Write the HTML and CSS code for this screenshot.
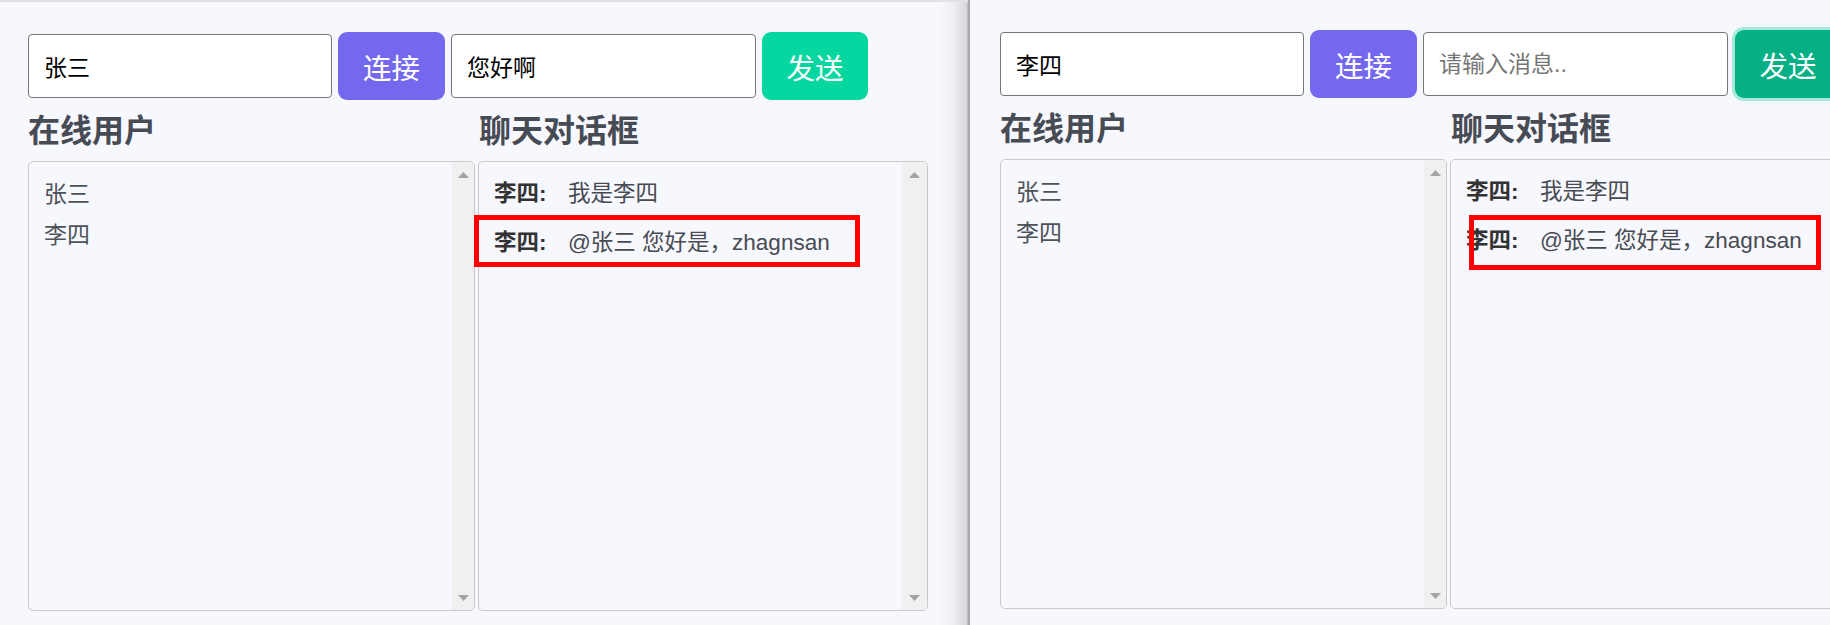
FILE: index.html
```html
<!DOCTYPE html>
<html lang="zh">
<head>
<meta charset="utf-8">
<title>聊天室</title>
<link rel="stylesheet" href="styles.css">
</head>
<body>
<div class="screen">
  <div class="window window-left">
    <div class="topbar"></div>
    <div class="page">
      <div class="controls">
        <input class="field" type="text" value="张三">
        <button class="btn btn-connect">连接</button>
        <input class="field field-msg" type="text" value="您好啊" placeholder="请输入消息..">
        <button class="btn btn-send">发送</button>
      </div>
      <div class="columns">
        <div class="col col-users">
          <h2 class="title">在线用户</h2>
          <div class="box">
            <div class="box-content">
              <div class="user">张三</div>
              <div class="user">李四</div>
            </div>
            <div class="scrollbar">
              <svg class="arrow" viewBox="0 0 11 6"><polygon points="0,6 11,6 5.5,0" fill="#a3a3a3"/></svg>
              <svg class="arrow" viewBox="0 0 11 6"><polygon points="0,0 11,0 5.5,6" fill="#a3a3a3"/></svg>
            </div>
          </div>
        </div>
        <div class="col col-chat">
          <h2 class="title">聊天对话框</h2>
          <div class="box">
            <div class="box-content">
              <div class="msg"><span class="name">李四:</span><span class="text">我是李四</span></div>
              <div class="msg"><span class="name">李四:</span><span class="text">@张三 您好是，zhagnsan</span></div>
            </div>
            <div class="scrollbar scrollbar-wide">
              <svg class="arrow" viewBox="0 0 11 6"><polygon points="0,6 11,6 5.5,0" fill="#a3a3a3"/></svg>
              <svg class="arrow" viewBox="0 0 11 6"><polygon points="0,0 11,0 5.5,6" fill="#a3a3a3"/></svg>
            </div>
          </div>
        </div>
      </div>
    </div>
    <div class="mark mark-left"></div>
  </div>
  <div class="edge"></div>
  <div class="window window-right">
    <div class="page page-right">
      <div class="controls">
        <input class="field" type="text" value="李四">
        <button class="btn btn-connect">连接</button>
        <input class="field field-msg" type="text" value="" placeholder="请输入消息..">
        <button class="btn btn-send btn-send-focus">发送</button>
      </div>
      <div class="columns">
        <div class="col col-users">
          <h2 class="title">在线用户</h2>
          <div class="box">
            <div class="box-content">
              <div class="user">张三</div>
              <div class="user">李四</div>
            </div>
            <div class="scrollbar">
              <svg class="arrow" viewBox="0 0 11 6"><polygon points="0,6 11,6 5.5,0" fill="#a3a3a3"/></svg>
              <svg class="arrow" viewBox="0 0 11 6"><polygon points="0,0 11,0 5.5,6" fill="#a3a3a3"/></svg>
            </div>
          </div>
        </div>
        <div class="col col-chat">
          <h2 class="title">聊天对话框</h2>
          <div class="box">
            <div class="box-content">
              <div class="msg"><span class="name">李四:</span><span class="text">我是李四</span></div>
              <div class="msg"><span class="name">李四:</span><span class="text">@张三 您好是，zhagnsan</span></div>
            </div>
            <div class="scrollbar scrollbar-wide">
              <svg class="arrow" viewBox="0 0 11 6"><polygon points="0,6 11,6 5.5,0" fill="#a3a3a3"/></svg>
              <svg class="arrow" viewBox="0 0 11 6"><polygon points="0,0 11,0 5.5,6" fill="#a3a3a3"/></svg>
            </div>
          </div>
        </div>
      </div>
    </div>
    <div class="mark mark-right"></div>
  </div>
</div>
</body>
</html>
```

FILE: styles.css
```css
* { box-sizing: border-box; }
html, body {
  margin: 0;
  padding: 0;
  width: 1830px;
  height: 625px;
  overflow: hidden;
  background: #f7f7fe;
  font-family: "Liberation Sans", "Noto Sans CJK SC", sans-serif;
}
.screen {
  display: flex;
  width: 1830px;
  height: 625px;
  overflow: hidden;
}
.window {
  position: relative;
  background: #f7f7fe;
  height: 625px;
  flex-shrink: 0;
}
.window-left {
  width: 940px;
  overflow: visible;
}
.topbar {
  position: relative;
  z-index: 3;
  height: 2px;
  width: 968px;
  background: #e1e1e4;
}
.edge {
  width: 30px;
  height: 625px;
  flex-shrink: 0;
  background: linear-gradient(to right, #f7f7fe 0px, #efeff5 12px, #d6d6dc 27px, #a9a9ae 28px, #a9a9ae 30px);
  position: relative;
  z-index: 1;
}
.window-right {
  flex: 1;
  min-width: 0;
  overflow: hidden;
}
.page {
  padding: 30px 0 0 28px;
  width: max-content;
}
.page-right {
  padding: 30px 0 0 30px;
}
.controls {
  display: flex;
  align-items: center;
  gap: 6px;
}
.field {
  width: 304px;
  height: 64px;
  border: 1px solid #767676;
  border-radius: 4px;
  background: #ffffff;
  padding: 0 15px;
  font-family: "Liberation Sans", "Noto Sans CJK SC", sans-serif;
  font-size: 23px;
  color: #000000;
  outline: none;
  flex-shrink: 0;
}
.field-msg { width: 305px; }
.field::placeholder { color: #767676; }
.btn {
  width: 107px;
  height: 68px;
  border: none;
  border-radius: 9px;
  color: #ffffff;
  font-family: "Liberation Sans", "Noto Sans CJK SC", sans-serif;
  font-size: 28.5px;
  padding: 0;
  flex-shrink: 0;
}
.btn-connect { background: #7469ee; }
.btn-send { background: #06d6a0; width: 106px; }
.btn-send-focus {
  background: #06b084;
  box-shadow: 0 0 0 3px #a3ebd8;
  margin-left: 1px;
}
.columns {
  display: grid;
  grid-template-columns: 447px 450px;
  column-gap: 3px;
}
.title {
  margin: 11px 0 10px 0;
  font-size: 32px;
  line-height: 40px;
  font-weight: bold;
  color: #474b53;
}
.col-chat .title { margin-left: 1px; }
.box {
  height: 450px;
  border: 1px solid #c9c9cd;
  border-radius: 5px;
  background: #f7f7fe;
  display: flex;
  overflow: hidden;
}
.box-content {
  flex: 1;
  padding: 12px 0 0 15px;
}
.scrollbar {
  width: 22px;
  background: #f0f0f0;
  display: flex;
  flex-direction: column;
  justify-content: space-between;
  align-items: center;
  padding: 10px 0 9px 0;
}
.scrollbar-wide { width: 25px; }
.arrow {
  width: 11px;
  height: 6px;
  display: block;
}
.user {
  font-size: 23px;
  line-height: 41px;
  color: #4e535a;
}
.msg {
  font-size: 22.5px;
  line-height: 40px;
  margin-bottom: 9px;
  color: #474b52;
  white-space: nowrap;
}
.name {
  display: inline-block;
  font-weight: bold;
  color: #333333;
  width: 74px;
}
.mark {
  position: absolute;
  border: 5px solid #ff0000;
  z-index: 2;
}
.mark-left {
  left: 474px;
  top: 215px;
  width: 386px;
  height: 52px;
}
.mark-right {
  left: 499px;
  top: 215px;
  width: 352px;
  height: 55px;
}
```
